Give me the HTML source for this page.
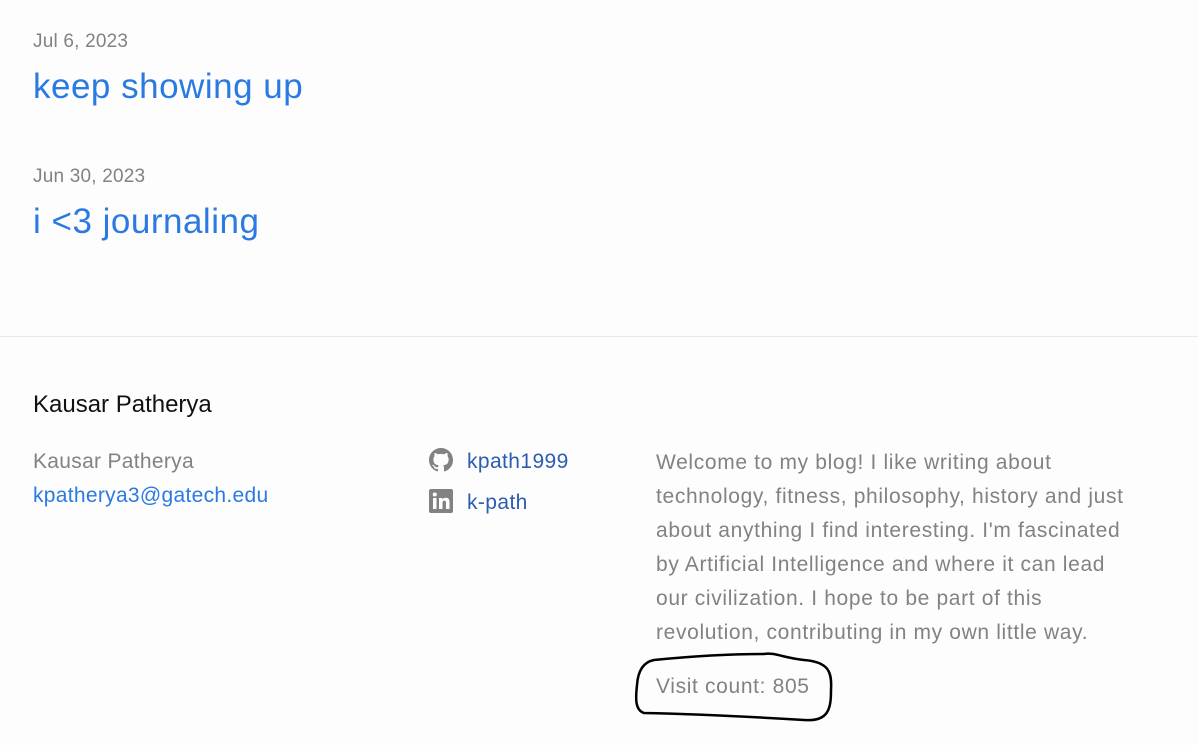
<!DOCTYPE html>
<html><head><style>
body{margin:0;background:#fdfdfd;font-family:"Liberation Sans",sans-serif;color:#111;width:1198px;height:745px;overflow:hidden;position:relative}
.a{position:absolute;white-space:nowrap}
.date{color:#828282;font-size:19px;letter-spacing:0.2px}
.t{color:#2a7ae2;font-size:35px;letter-spacing:0.5px}
.g{color:#828282;font-size:21px;letter-spacing:0.65px}
.l{color:#2a7ae2;font-size:21px;letter-spacing:0.3px}
.d{color:#2a5db0;font-size:21px;letter-spacing:0.4px}
</style></head><body>
<div class="a date" style="left:33px;top:31px">Jul 6, 2023</div>
<div class="a t" style="left:33px;top:67px">keep showing up</div>
<div class="a date" style="left:33px;top:166px">Jun 30, 2023</div>
<div class="a t" style="left:33px;top:202px">i &lt;3 journaling</div>
<div style="position:absolute;left:0;right:0;top:336px;border-top:1px solid #e8e8e8"></div>
<div class="a" style="left:33px;top:391px;font-size:24px;color:#111">Kausar Patherya</div>
<div class="a g" style="left:33px;top:450px;letter-spacing:0.3px">Kausar Patherya</div>
<div class="a l" style="left:33px;top:484px">kpatherya3@gatech.edu</div>
<svg class="a" style="left:429px;top:448px" width="24" height="24" viewBox="0 0 16 16"><path fill="#828282" d="M8 0C3.58 0 0 3.580 0 8c0 3.54 2.29 6.53 5.470 7.59.4.07.55-.17.55-.38v-1.33c-2.230.48-2.7-1.070-2.7-1.070-.36-.92-.89-1.170-.89-1.170-.73-.5.06-.49.06-.49.8.06 1.230.82 1.230.82.72 1.220 1.870.87 2.330.66.07-.52.28-.87.5-1.070-1.780-.2-3.640-.89-3.640-3.950 0-.87.31-1.590.82-2.150-.08-.2-.36-1.020.08-2.120 0 0 .67-.21 2.2.82A7.7 7.7 0 0 1 8 3.88c.68 0 1.360.09 2 .27 1.530-1.040 2.2-.82 2.2-.82.44 1.1.16 1.920.08 2.120.51.56.82 1.270.82 2.150 0 3.070-1.870 3.750-3.650 3.950.29.25.54.73.54 1.480v2.2c0 .21.15.46.55.38A8 8 0 0 0 16 8c0-4.420-3.580-8-8-8z"/></svg>
<div class="a d" style="left:467px;top:450px">kpath1999</div>
<svg class="a" style="left:429px;top:489px" width="24" height="24" viewBox="0 0 24 24"><rect width="24" height="24" rx="2" fill="#828282"/><rect x="4" y="9" width="3.5" height="11" fill="#fff"/><circle cx="5.75" cy="5.5" r="2" fill="#fff"/><path fill="#fff" d="M10 9h3.3v1.6c.6-1 1.8-1.9 3.6-1.9 3 0 3.6 2 3.6 4.6V20H17v-5.8c0-1.4-.1-2.6-1.6-2.6s-1.9 1.1-1.9 2.5V20H10z"/></svg>
<div class="a d" style="left:467px;top:491px">k-path</div>
<div class="a g" style="left:656px;top:446px;white-space:normal;width:482px;line-height:34px">Welcome to my blog! I like writing about technology, fitness, philosophy, history and just about anything I find interesting. I'm fascinated by Artificial Intelligence and where it can lead our civilization. I hope to be part of this revolution, contributing in my own little way.</div>
<div class="a g" style="left:656px;top:675px">Visit count: 805</div>
<svg class="a" style="left:634px;top:650px" width="202" height="74" viewBox="0 0 202 74"><path d="M20 10 C60 6,100 4,130 4 C140 2,150 8,170 10 C195 12,198 22,197 40 C197 58,195 72,170 70 C120 67,60 64,10 63 C0 60,2 45,3 35 C4 20,10 12,20 10 Z" fill="none" stroke="#000" stroke-width="2.5"/></svg>
</body></html>
